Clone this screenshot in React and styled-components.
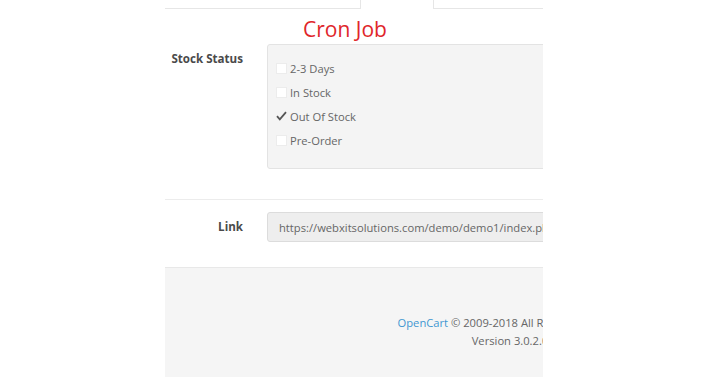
import React from "react";
import styled, { createGlobalStyle } from "styled-components";

const GlobalStyle = createGlobalStyle`
  html, body {
    margin: 0;
    padding: 0;
    background: #ffffff;
    font-family: "Open Sans", "Noto Sans", sans-serif;
    font-size: 11.2px;
    color: #666666;
  }
`;

const Viewport = styled.div`
  margin-left: 165px;
  width: 378px;
  height: 378px;
  overflow: hidden;
`;

const Stage = styled.div`
  width: 690px;
  display: flex;
  flex-direction: column;
`;

const TopStrip = styled.div`
  display: flex;
  gap: 72px;
  height: 9px;
`;

const TopBox = styled.div`
  box-sizing: border-box;
  height: 9px;
  background: #fff;
  border-bottom: 1px solid #e6e6e6;
  border-left: ${(p) => (p.$side === "right" ? "1px solid #e6e6e6" : "none")};
  border-right: ${(p) => (p.$side === "left" ? "1px solid #e6e6e6" : "none")};
  width: ${(p) => (p.$side === "left" ? "196px" : "auto")};
  flex: ${(p) => (p.$side === "right" ? "1" : "none")};
`;

const Heading = styled.div`
  margin-top: 7px;
  padding-left: 138px;
  height: 26px;
  line-height: 26px;
  font-size: 21px;
  color: #e0262b;
  margin-bottom: 2px;
`;

const FormRow = styled.div`
  display: grid;
  grid-template-columns: 102px 1fr;
  padding: ${(p) => p.$pad};
  border-top: ${(p) => (p.$divided ? "1px solid #ececec" : "none")};
`;

const Label = styled.label`
  box-sizing: border-box;
  padding-right: 24px;
  padding-top: ${(p) => p.$top || "7px"};
  text-align: right;
  font-weight: 700;
  font-size: 11.6px;
  color: #4a4a4a;
  line-height: 17px;
`;

const Well = styled.div`
  box-sizing: border-box;
  height: 125px;
  margin-right: 15px;
  background: #f4f4f4;
  border: 1px solid #e3e3e3;
  border-radius: 3px;
  padding: 11px 8px 0;
  display: flex;
  flex-direction: column;
`;

const CheckRow = styled.div`
  display: flex;
  align-items: center;
  height: 24px;
  gap: 3px;
  color: #666;
`;

const Box = styled.span`
  box-sizing: border-box;
  width: 11px;
  height: 11px;
  display: inline-flex;
  align-items: center;
  justify-content: center;
  background: ${(p) => (p.$checked ? "transparent" : "#ffffff")};
  border: ${(p) => (p.$checked ? "none" : "1px solid #ececec")};
`;

const Input = styled.div`
  box-sizing: border-box;
  height: 30px;
  margin-right: 15px;
  background: #eeeeee;
  border: 1px solid #dcdcdc;
  border-radius: 3px;
  padding: 0 11px;
  display: flex;
  align-items: center;
  white-space: nowrap;
  overflow: hidden;
  color: #666;
`;

const Footer = styled.footer`
  margin-top: 25px;
  height: 110px;
  background: #f5f5f5;
  border-top: 1px solid #e8e8e8;
  box-sizing: border-box;
  padding-top: 46px;
  text-align: center;
  line-height: 18px;
  color: #666;
`;

const FooterLink = styled.a`
  color: #3f97d1;
  text-decoration: none;
`;

const Check = () => (
  <svg width="11" height="10" viewBox="0 0 11 10">
    <path d="M1 5.2 L3.8 8.3 L10 1.2" fill="none" stroke="#555" strokeWidth="1.8" />
  </svg>
);

const statuses = [
  { name: "2-3 Days", checked: false },
  { name: "In Stock", checked: false },
  { name: "Out Of Stock", checked: true },
  { name: "Pre-Order", checked: false },
];

export default function App() {
  return (
    <>
      <GlobalStyle />
      <Viewport>
        <Stage>
          <TopStrip>
            <TopBox $side="left" />
            <TopBox $side="right" />
          </TopStrip>
          <Heading>Cron Job</Heading>
          <FormRow $pad="0 0 30px">
            <Label $top="6px">Stock Status</Label>
            <Well>
              {statuses.map((s) => (
                <CheckRow key={s.name}>
                  <Box $checked={s.checked}>{s.checked && <Check />}</Box>
                  {s.name}
                </CheckRow>
              ))}
            </Well>
          </FormRow>
          <FormRow $divided $pad="12px 0 0">
            <Label $top="6px">Link</Label>
            <Input>https://webxitsolutions.com/demo/demo1/index.php?route=extension/module/stock_notify/cron</Input>
          </FormRow>
          <Footer>
            <FooterLink href="#">OpenCart</FooterLink> © 2009-2018 All Rights Reserved.
            <br />
            Version 3.0.2.0
          </Footer>
        </Stage>
      </Viewport>
    </>
  );
}
